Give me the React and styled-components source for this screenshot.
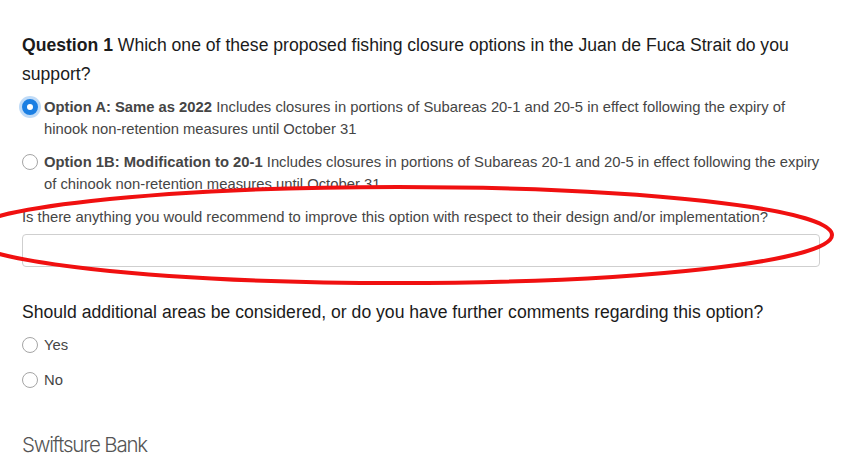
import React from 'react';
import styled, { createGlobalStyle } from 'styled-components';

const GlobalStyle = createGlobalStyle`
  html, body {
    margin: 0;
    background: #fff;
  }
  body {
    font-family: "Liberation Sans", Arial, Helvetica, sans-serif;
    color: #222;
  }
`;

const Page = styled.div`
  position: relative;
  width: 850px;
  height: 460px;
  overflow: hidden;
  padding: 31px 30px 0 22px;
  box-sizing: border-box;
`;

const Question = styled.h2`
  margin: 0;
  font-size: 17.6px;
  line-height: 29px;
  font-weight: 400;
  color: #1b1b1b;
  b {
    font-weight: 700;
  }
`;

const Options = styled.div`
  display: flex;
  flex-direction: column;
  gap: ${p => p.gap || 12}px;
  margin-top: ${p => p.top || 12}px;
`;

const OptionRow = styled.label`
  display: flex;
  align-items: flex-start;
  gap: 6px;
  font-size: 14.8px;
  line-height: 22px;
  color: #454545;
  b {
    font-weight: 700;
  }
`;

const Radio = styled.span`
  flex: 0 0 auto;
  width: 16px;
  height: 16px;
  margin-top: 3px;
  border-radius: 50%;
  box-sizing: border-box;
  border: ${p => (p.checked ? '5px solid #1b7fe3' : '1px solid #a5a5a5')};
  background: #fff;
  box-shadow: ${p => (p.checked ? '0 0 0 3px rgba(27,127,227,0.28)' : 'none')};
`;

const Prompt = styled.div`
  margin-top: 12px;
  font-size: 14.8px;
  line-height: 20px;
  color: #454545;
`;

const TextInput = styled.input`
  display: block;
  width: 798px;
  height: 33px;
  margin-top: 7px;
  box-sizing: border-box;
  border: 1px solid #cfcfcf;
  border-radius: 4px;
  background: #fff;
  outline: none;
`;

const SubQuestion = styled.div`
  margin-top: 32px;
  font-size: 17.6px;
  line-height: 26px;
  color: #1b1b1b;
`;

const Brand = styled.div`
  margin-top: 41px;
  font-family: "Inter", "Liberation Sans", sans-serif;
  font-weight: 300;
  font-size: 20.5px;
  letter-spacing: -1.2px;
  color: #555;
`;

const Annotation = styled.svg`
  position: absolute;
  left: 0;
  top: 0;
  pointer-events: none;
`;

export default function App() {
  return (
    <>
      <GlobalStyle />
      <Page>
        <Question>
          <b>Question 1</b> Which one of these proposed fishing closure options in the Juan de Fuca Strait do you support?
        </Question>
        <Options top={7} gap={11}>
          <OptionRow>
            <Radio checked />
            <span>
              <b>Option A: Same as 2022</b> Includes closures in portions of Subareas 20-1 and 20-5 in effect following the expiry of hinook non-retention measures until October 31
            </span>
          </OptionRow>
          <OptionRow>
            <Radio />
            <span>
              <b>Option 1B: Modification to 20-1</b> Includes closures in portions of Subareas 20-1 and 20-5 in effect following the expiry of chinook non-retention measures until October 31
            </span>
          </OptionRow>
        </Options>
        <Prompt>
          Is there anything you would recommend to improve this option with respect to their design and/or implementation?
        </Prompt>
        <TextInput type="text" />
        <SubQuestion>
          Should additional areas be considered, or do you have further comments regarding this option?
        </SubQuestion>
        <Options top={9} gap={13}>
          <OptionRow>
            <Radio />
            <span>Yes</span>
          </OptionRow>
          <OptionRow>
            <Radio />
            <span>No</span>
          </OptionRow>
        </Options>
        <Brand>Swiftsure Bank</Brand>
        <Annotation width="850" height="460" viewBox="0 0 850 460">
          <ellipse cx="398" cy="235" rx="434" ry="48" fill="none" stroke="#f01010" strokeWidth="4" />
        </Annotation>
      </Page>
    </>
  );
}
